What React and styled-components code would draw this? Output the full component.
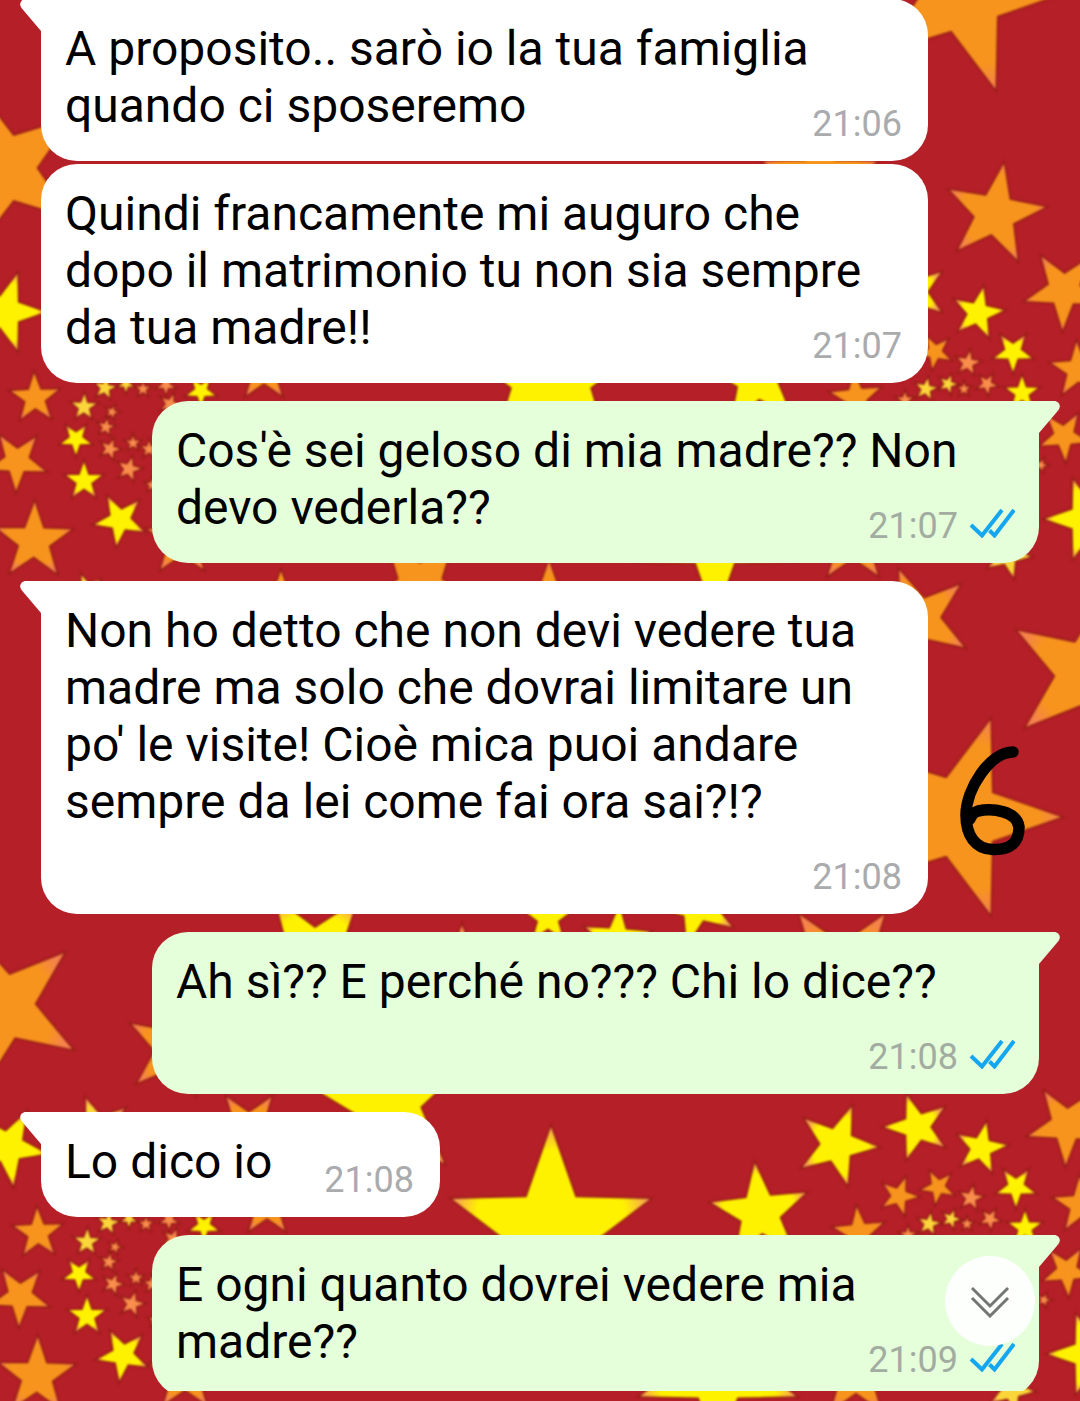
import React from 'react'
import styled, { createGlobalStyle } from 'styled-components'

const GlobalStyle = createGlobalStyle`
    body {
        margin: 0;
        background: #b51f27;
        font-family: Roboto, "Liberation Sans", sans-serif;
    }
`

const Screen = styled.div`
    position: relative;
    display: flex;
    flex-direction: column;
    height: 100vh;
    overflow: hidden;
    padding-bottom: 10px;
    box-sizing: border-box;
`

const Wallpaper = styled.svg`
    position: absolute;
    top: 0;
    left: 0;
    width: 100%;
    height: 100%;

    g {
        filter: blur(1px);
    }

    polygon {
        stroke: #8c1d12;
        stroke-width: 3px;
        stroke-opacity: 0.8;
        paint-order: stroke;
    }
`

const MessageList = styled.main`
    position: relative;
    flex: 1;
    min-height: 0;
    overflow: hidden;
    display: flex;
    flex-direction: column;
    padding: 0 41px;
    margin-top: -1px;
`

const Bubble = styled.article`
    position: relative;
    flex: none;
    box-sizing: border-box;
    max-width: calc(100% - 111px);
    padding: 21px ${props => props.$mine ? '24px' : '26px'} 16px 24px;
    border-radius: 36px;
    align-self: ${props => props.$mine ? 'flex-end' : 'flex-start'};
    background: ${props => props.$mine ? '#e4ffda' : '#ffffff'};
    margin-top: ${props => props.$grouped ? '3px' : '18px'};
    border-top-left-radius: ${props => props.$tail && !props.$mine ? '0' : '36px'};
    border-top-right-radius: ${props => props.$tail && props.$mine ? '0' : '36px'};

    &:first-child {
        margin-top: 0;
    }
`

const TailShape = styled.svg`
    position: absolute;
    top: 0;
    width: 22px;
    height: 32px;
    ${props => props.$mine ? 'right: -21px; transform: scaleX(-1);' : 'left: -21px;'}
    fill: ${props => props.$mine ? '#e4ffda' : '#ffffff'};
`

const Text = styled.div`
    display: flow-root;
    color: #000000;
    font-size: 48px;
    line-height: 57px;
`

/* floats beside the last line, or drops below it when there is no room */
const Meta = styled.span`
    float: right;
    display: flex;
    align-items: center;
    gap: 11px;
    margin-top: 26px;
    margin-left: 52px;
`

const Time = styled.time`
    color: ${props => props.$mine ? '#a2aca1' : '#a9abad'};
    font-size: 36px;
    line-height: 42px;
`

const Ticks = styled.svg`
    width: 46px;
    height: 30px;
    margin-bottom: 6px;
    fill: none;
    stroke: #14a6f0;
    stroke-width: 4;
`

const ScrollButton = styled.button`
    position: absolute;
    right: 45px;
    bottom: 55px;
    width: 90px;
    height: 90px;
    padding: 0;
    border: none;
    border-radius: 50%;
    background: #fdfffc;
    display: flex;
    align-items: center;
    justify-content: center;
    cursor: pointer;

    svg {
        width: 40px;
        height: 34px;
        fill: none;
        stroke: #757575;
        stroke-width: 3;
    }
`

const Scribble = styled.svg`
    position: absolute;
    top: 740px;
    right: 50px;
    width: 75px;
    height: 120px;
    fill: none;
    stroke: #000000;
    stroke-width: 11.5;
    stroke-linecap: round;
    stroke-linejoin: round;
`

// each star: x, y, radius, angle of one tip, colour
const clusterStars = [
    [35, 398, 25, -2, 'orange'],
    [17, 461, 30, 182, 'orange'],
    [34, 541, 39, 1, 'orange'],
    [84, 407, 13, 2, 'gold'],
    [76, 439, 16, 180, 'yellow'],
    [84, 481, 19, 0, 'yellow'],
    [120, 520, 26, 188, 'yellow'],
    [105, 388, 11, 10, 'gold'],
    [126, 384, 8, 180, 'gold'],
    [143, 389, 7, 0, 'coral'],
    [166, 385, 9, 180, 'coral'],
    [112, 412, 6, 20, 'coral'],
    [106, 427, 8, 10, 'coral'],
    [110, 449, 10, 20, 'coral'],
    [133, 443, 7, 0, 'coral'],
    [129, 469, 12, 15, 'coral'],
    [149, 449, 8, 0, 'coral'],
    [152, 485, 6, 0, 'coral'],
    [170, 404, 10, 20, 'coral'],
    [201, 391, 15, 180, 'yellow'],
    [264, 371, 30, 0, 'orange'],
    [182, 540, 36, 0, 'orange'],
    [914, 292, 33, 54, 'yellow'],
    [978, 313, 26, 12, 'yellow'],
    [1013, 352, 20, 180, 'yellow'],
    [1064, 290, 40, 182, 'orange'],
    [896, 361, 19, 92, 'orange'],
    [935, 352, 17, 45, 'orange'],
    [968, 363, 12, 10, 'coral'],
    [926, 389, 11, 10, 'gold'],
    [948, 384, 9, 20, 'gold'],
    [964, 389, 6, 0, 'coral'],
    [987, 384, 10, 30, 'coral'],
    [1022, 393, 17, 0, 'yellow'],
    [856, 398, 26, -5, 'orange'],
    [905, 400, 8, 0, 'coral'],
    [1078, 370, 28, -3, 'orange'],
    [1064, 436, 25, 176, 'orange'],
    [1041, 465, 6, 20, 'coral'],
    [1086, 519, 41, 270, 'yellow'],
    [853, 541, 42, 0, 'orange'],
    [1008, 555, 23, 166, 'gold'],
    [715, 536, 82, 180, 'yellow'],
]

const wallpaperStars = [
    [964, -8, 102, 90, 'orange'],
    [995, 214, 51, 10, 'orange'],
    [3, 168, 84, 54, 'orange'],
    [5, 312, 40, 90, 'yellow'],
    [820, 180, 60, 0, 'orange'],
    [551, 375, 103, 0, 'yellow'],
    [757, 378, 52, -6, 'yellow'],
    [87, 590, 16, -20, 'gold'],
    [281, 600, 29, 0, 'orange'],
    [420, 586, 56, 180, 'orange'],
    [549, 620, 59, 0, 'orange'],
    [919, 619, 53, 50, 'orange'],
    [1088, 673, 82, 301, 'orange'],
    [959, 817, 102, 90, 'orange'],
    [314, 956, 70, 182, 'yellow'],
    [462, 950, 25, 0, 'coral'],
    [548, 918, 26, 0, 'yellow'],
    [617, 940, 34, 4, 'yellow'],
    [697, 905, 41, 194, 'yellow'],
    [842, 973, 72, -36, 'orange'],
    [2, 1007, 82, 49, 'orange'],
    [175, 1049, 50, 300, 'orange'],
    [98, 1130, 34, -21, 'gold'],
    [8, 1147, 39, 28, 'yellow'],
    [249, 1128, 38, 180, 'orange'],
    [387, 1100, 85, -6, 'yellow'],
    [551, 1231, 104, 0, 'yellow'],
    [760, 1213, 50, -6, 'yellow'],
    [837, 1145, 41, 93, 'yellow'],
]

const starPoints = (x, y, radius, angle) => {
    const points = []
    for (let i = 0; i < 10; i++) {
        const r = i % 2 ? radius * 0.4 : radius
        const a = (angle + i * 36) * Math.PI / 180
        points.push((x + r * Math.sin(a)).toFixed(1) + ',' + (y - r * Math.cos(a)).toFixed(1))
    }
    return points.join(' ')
}

const starColors = {
    yellow: ['#fff200', '#f7a353'],
    orange: ['#f7941d', '#f5824c'],
    gold: ['#fbd63a', '#f58a55'],
    coral: ['#f98d4c', '#e85c4c'],
}

const messages = [
    { text: 'A proposito.. sarò io la tua famiglia quando ci sposeremo', time: '21:06', tail: true },
    { text: 'Quindi francamente mi auguro che dopo il matrimonio tu non sia sempre da tua madre!!', time: '21:07', grouped: true },
    { text: "Cos'è sei geloso di mia madre?? Non devo vederla??", time: '21:07', mine: true, tail: true },
    { text: "Non ho detto che non devi vedere tua madre ma solo che dovrai limitare un po' le visite! Cioè mica puoi andare sempre da lei come fai ora sai?!?", time: '21:08', tail: true },
    { text: 'Ah sì?? E perché no??? Chi lo dice??', time: '21:08', mine: true, tail: true },
    { text: 'Lo dico io', time: '21:08', tail: true },
    { text: 'E ogni quanto dovrei vedere mia madre??', time: '21:09', mine: true, tail: true },
]

const Stars = ({ stars }) => stars.map(([x, y, radius, angle, color], i) => (
    <polygon key={i} points={starPoints(x, y, radius, angle)} fill={`url(#${color})`} />
))

const Background = () => (
    <Wallpaper viewBox="0 0 1080 1401" preserveAspectRatio="xMidYMid slice" aria-hidden="true">
        <defs>
            {Object.keys(starColors).map(name => (
                <radialGradient id={name} key={name}>
                    <stop offset="0.75" stopColor={starColors[name][0]} />
                    <stop offset="1" stopColor={starColors[name][1]} />
                </radialGradient>
            ))}
        </defs>
        <rect width="1080" height="1401" fill="#b51f27" />
        <g>
            <Stars stars={wallpaperStars} />
            <Stars stars={clusterStars} />
            <Stars stars={clusterStars.map(([x, y, ...rest]) => [x + 3, y + 835, ...rest])} />
        </g>
    </Wallpaper>
)

class Message extends React.Component {

    render() {
        const { text, time, mine, tail, grouped } = this.props.data

        return (
            <Bubble $mine={mine} $tail={tail} $grouped={grouped}>
                {tail && (
                    <TailShape $mine={mine} viewBox="0 0 22 32" aria-hidden="true">
                        <path d="M22 0H6C1 0 -1.500 5 1.500 9L21 32H22Z" />
                    </TailShape>
                )}
                <Text>
                    {text}
                    <Meta>
                        <Time $mine={mine}>{time}</Time>
                        {mine && (
                            <Ticks viewBox="0 0 46 30" role="img" aria-label="Letto">
                                <path d="M2 17L13 27.500L33 2M20.500 22.500L25.500 27.500L45 2" />
                            </Ticks>
                        )}
                    </Meta>
                </Text>
            </Bubble>
        )
    }
}

const App = () => {
    return (
        <Screen>
            <GlobalStyle />
            <Background />
            <MessageList>
                {messages.map((message, i) => <Message key={i} data={message} />)}
            </MessageList>
            <Scribble viewBox="955 740 75 120" role="img" aria-label="6">
                <path d="M1013 752C990 752 966 789 966 815C966 835 975 849 993 849.500C1010 850 1019 843 1019 827C1017 811 993 808 978 811C974 812 971 816 970 819" />
            </Scribble>
            <ScrollButton type="button" aria-label="Vai in fondo">
                <svg viewBox="0 0 40 34">
                    <path d="M2 4L20 22L38 4M2 14L20 32L38 14" />
                </svg>
            </ScrollButton>
        </Screen>
    )
}

export default App
